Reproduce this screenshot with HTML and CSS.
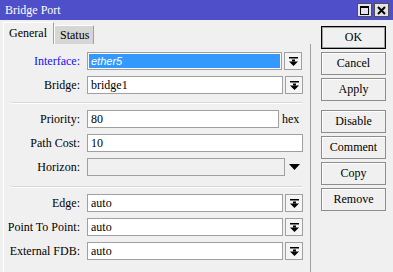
FILE: index.html
```html
<!DOCTYPE html>
<html lang="en">
<head>
<meta charset="UTF-8">
<title>Bridge Port</title>
<link rel="stylesheet" href="styles.css">
</head>
<body>
<div class="window">
  <div class="titlebar">
    <span class="title">Bridge Port</span>
    <div class="win-btns">
      <span class="win-btn">
        <svg width="9" height="9" viewBox="0 0 9 9"><rect x="0.5" y="0.5" width="8" height="8" fill="none" stroke="#000"/><rect x="0" y="0" width="9" height="2" fill="#000"/></svg>
      </span>
      <span class="win-btn">
        <svg width="9" height="9" viewBox="0 0 9 9"><path d="M1 1 L8 8 M8 1 L1 8" stroke="#000" stroke-width="2"/></svg>
      </span>
    </div>
  </div>

  <div class="body">
    <div class="tabbox">
      <div class="tabs">
        <div class="tab active">General</div>
        <div class="tab">Status</div>
      </div>
      <div class="panel">
        <div class="group">
          <div class="row">
            <span class="lbl blue">Interface:</span>
            <div class="field sel"><span class="sel-text">ether5</span></div>
            <div class="drop"><svg width="9" height="9" viewBox="0 0 9 9"><rect x="0" y="0" width="9" height="1.5" fill="#000"/><rect x="3" y="2.5" width="3" height="2" fill="#000"/><polygon points="0,4.5 9,4.5 4.5,9" fill="#000"/></svg></div>
          </div>
          <div class="row">
            <span class="lbl">Bridge:</span>
            <div class="field">bridge1</div>
            <div class="drop"><svg width="9" height="9" viewBox="0 0 9 9"><rect x="0" y="0" width="9" height="1.5" fill="#000"/><rect x="3" y="2.5" width="3" height="2" fill="#000"/><polygon points="0,4.5 9,4.5 4.5,9" fill="#000"/></svg></div>
          </div>
        </div>

        <div class="sep"></div>

        <div class="group">
          <div class="row">
            <span class="lbl">Priority:</span>
            <div class="field">80</div>
            <span class="unit">hex</span>
          </div>
          <div class="row">
            <span class="lbl">Path Cost:</span>
            <div class="field">10</div>
          </div>
          <div class="row">
            <span class="lbl">Horizon:</span>
            <div class="field off"></div>
            <div class="arrow"><svg width="11" height="6" viewBox="0 0 11 6"><polygon points="0,0 11,0 5.5,6" fill="#000"/></svg></div>
          </div>
        </div>

        <div class="sep sep-wide"></div>

        <div class="group">
          <div class="row">
            <span class="lbl">Edge:</span>
            <div class="field">auto</div>
            <div class="drop"><svg width="9" height="9" viewBox="0 0 9 9"><rect x="0" y="0" width="9" height="1.5" fill="#000"/><rect x="3" y="2.5" width="3" height="2" fill="#000"/><polygon points="0,4.5 9,4.5 4.5,9" fill="#000"/></svg></div>
          </div>
          <div class="row">
            <span class="lbl">Point To Point:</span>
            <div class="field">auto</div>
            <div class="drop"><svg width="9" height="9" viewBox="0 0 9 9"><rect x="0" y="0" width="9" height="1.5" fill="#000"/><rect x="3" y="2.5" width="3" height="2" fill="#000"/><polygon points="0,4.5 9,4.5 4.5,9" fill="#000"/></svg></div>
          </div>
          <div class="row">
            <span class="lbl">External FDB:</span>
            <div class="field">auto</div>
            <div class="drop"><svg width="9" height="9" viewBox="0 0 9 9"><rect x="0" y="0" width="9" height="1.5" fill="#000"/><rect x="3" y="2.5" width="3" height="2" fill="#000"/><polygon points="0,4.5 9,4.5 4.5,9" fill="#000"/></svg></div>
          </div>
        </div>
      </div>
    </div>

    <div class="actions">
      <div class="btn-group">
        <div class="btn default">OK</div>
        <div class="btn">Cancel</div>
        <div class="btn">Apply</div>
      </div>
      <div class="btn-group">
        <div class="btn">Disable</div>
        <div class="btn">Comment</div>
        <div class="btn">Copy</div>
        <div class="btn">Remove</div>
      </div>
    </div>
  </div>
</div>
</body>
</html>
```

FILE: styles.css
```css
body {
  margin: 0;
  font-family: "Liberation Serif", "Times New Roman", serif;
  font-size: 12px;
  color: #000;
}

.window {
  width: 393px;
  height: 272px;
  background: #f0f0f0;
  overflow: hidden;
  display: flex;
  flex-direction: column;
}

/* title bar */
.titlebar {
  height: 20px;
  background: #4f4fc9;
  color: #fff;
  display: flex;
  align-items: center;
  justify-content: space-between;
  padding: 0 4px 0 5px;
  flex-shrink: 0;
}
.title { font-size: 12px; }
.win-btns { display: flex; gap: 2px; }
.win-btn {
  width: 13px;
  height: 12px;
  border: 1px solid #505050;
  background: #e4e4e4;
  display: flex;
  align-items: center;
  justify-content: center;
}

.body {
  flex: 1;
  display: flex;
}

/* tabs + panel */
.tabbox {
  width: 308px;
  margin-left: 3px;
  display: flex;
  flex-direction: column;
}
.tabs {
  height: 24px;
  display: flex;
  align-items: flex-end;
}
.tab {
  height: 18px;
  padding: 0 4px 0 5px;
  line-height: 18px;
  background: #d6d6d6;
  border-top: 1px solid #fff;
  border-left: 1px solid #fff;
  border-right: 1px solid #a0a0a0;
}
.tab.active {
  height: 21px;
  line-height: 21px;
  width: 40px;
  padding: 0 4px 0 5px;
  background: #f0f0f0;
}
.panel {
  flex: 1;
  border-left: 1px solid #fff;
  border-right: 1px solid #a0a0a0;
  padding-top: 8px;
}

.group {
  display: flex;
  flex-direction: column;
  gap: 6px;
}
.row {
  display: flex;
  align-items: center;
  height: 18px;
}
.lbl {
  width: 76px;
  margin-right: 7px;
  text-align: right;
  white-space: nowrap;
}
.lbl.blue { color: #1010ff; }

.field {
  flex: 1;
  height: 16px;
  line-height: 16px;
  padding-left: 3px;
  background: #fff;
  border: 1px solid #a0a0a0;
  white-space: nowrap;
}
.row .field { max-width: 211px; }
.field.off {
  background: #f0f0f0;
  max-width: 193px;
}
.field.sel {
  padding: 1px;
  height: 14px;
}
.sel-text {
  display: block;
  height: 14px;
  line-height: 14px;
  padding-left: 2px;
  background: #3399ff;
  color: #fff;
  font-style: italic;
  font-family: "Liberation Sans", Arial, sans-serif;
  font-size: 11px;
}
.drop {
  width: 16px;
  height: 16px;
  margin-left: 2px;
  border: 1px solid #a0a0a0;
  background: #f4f4f4;
  display: flex;
  align-items: center;
  justify-content: center;
}
.row:has(.drop) .field { max-width: 191px; }
.unit {
  width: 24px;
  margin-left: 3px;
}
.row:has(.unit) .field { max-width: 187px; }
.arrow {
  width: 18px;
  display: flex;
  justify-content: center;
}

.sep {
  margin: 8px 0 6px 7px;
  width: 291px;
  border-top: 1px solid #d8d8d8;
  border-bottom: 1px solid #fff;
}
.sep.sep-wide { margin-top: 10px; }

/* buttons */
.actions {
  margin-left: 10px;
  padding-top: 6px;
  width: 65px;
  display: flex;
  flex-direction: column;
  gap: 9px;
}
.btn-group {
  display: flex;
  flex-direction: column;
  gap: 3px;
}
.btn {
  height: 21px;
  line-height: 21px;
  text-align: center;
  border: 1px solid #8c8c8c;
  background: #f0f0f0;
  box-shadow: inset 1px 1px 0 #fff;
}
.btn.default {
  border-color: #000;
  box-shadow: inset 0 0 0 1px #a0a0a0;
}
```
